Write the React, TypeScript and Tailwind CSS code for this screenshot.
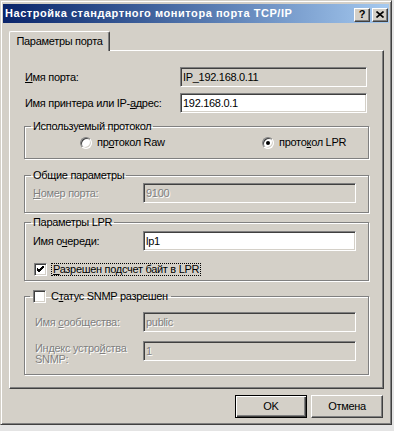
import React from "react";

const sunken =
  "border border-t-[#808080] border-l-[#808080] border-b-white border-r-white shadow-[inset_1px_1px_0_#404040,inset_-1px_-1px_0_#d4d0c8]";
const raised =
  "border border-t-white border-l-white border-b-[#404040] border-r-[#404040] shadow-[inset_-1px_-1px_0_#808080]";
const grey = "text-[#808080] [text-shadow:1px_1px_0_#fff]";

type FieldProps = { value: string; white?: boolean; disabled?: boolean; wide?: boolean };

const Field = ({ value, white, disabled, wide }: FieldProps) => (
  <div
    className={`h-[20px] ${wide ? "w-[187px]" : "w-[213px]"} ${sunken} flex items-center pl-[2px] ${
      white ? "bg-white" : "bg-[#d4d0c8]"
    } ${disabled ? grey : "text-black"}`}
  >
    {value}
  </div>
);

const Group = ({ title, h, children }: { title: React.ReactNode; h: string; children: React.ReactNode }) => (
  <fieldset
    className={`ml-[14px] w-[345px] ${h} border border-[#808080] shadow-[1px_1px_0_#fff,inset_1px_1px_0_#fff] px-[8px]`}
  >
    {title}
    {children}
  </fieldset>
);

const Radio = ({ checked }: { checked?: boolean }) => (
  <span
    className={`w-[12px] h-[12px] rounded-full bg-white ${sunken} flex items-center justify-center shrink-0`}
  >
    {checked && <span className="w-[4px] h-[4px] rounded-full bg-black" />}
  </span>
);

const Check = ({ checked }: { checked?: boolean }) => (
  <span className={`w-[13px] h-[13px] bg-white ${sunken} flex items-center justify-center shrink-0`}>
    {checked && (
      <svg width="7" height="7" viewBox="0 0 7 7">
        <path d="M0 3 L2 5 L7 0 M0 4 L2 6 L7 1 M0 2 L2 4 L7 -1" stroke="#000" strokeWidth="1" fill="none" />
      </svg>
    )}
  </span>
);

export default function App() {
  return (
    <div className="w-[394px] h-[431px] bg-[#e4e4e4] font-['Liberation_Sans',Arial,sans-serif] text-[11px] leading-[13px] tracking-[-0.3px] text-black">
      <div className="w-[392px] h-[425px] bg-[#d4d0c8] border border-t-[#d4d0c8] border-l-[#d4d0c8] border-b-[#404040] border-r-[#404040] shadow-[inset_1px_1px_0_#fff,inset_-1px_-1px_0_#808080] px-[2px] pt-[3px] flex flex-col">
        {/* title bar */}
        <div className="h-[19px] bg-gradient-to-r from-[#0a246a] to-[#a6caf0] flex items-center pl-[2px] pr-[1px]">
          <span className="text-white font-bold text-[11px] tracking-[0.55px]">
            Настройка стандартного монитора порта TCP/IP
          </span>
          <div className="ml-auto flex gap-[2px] pt-[2px] tracking-normal">
            <div className={`w-[16px] h-[14px] bg-[#d4d0c8] ${raised} flex items-center justify-center font-bold text-[11px] leading-none`}>
              ?
            </div>
            <div className={`w-[16px] h-[14px] bg-[#d4d0c8] ${raised} flex items-center justify-center`}>
              <svg width="8" height="7" viewBox="0 0 8 7">
                <path d="M0.5 0.5 L7.5 6.5 M7.5 0.5 L0.5 6.5" stroke="#000" strokeWidth="1.6" />
              </svg>
            </div>
          </div>
        </div>

        {/* tab */}
        <div className="mt-[8px] flex">
          <div className="ml-[6px] w-[101px] h-[20px] -mb-[1px] relative z-10 bg-[#d4d0c8] border-t border-l border-r border-t-white border-l-white border-r-[#404040] shadow-[inset_-1px_0_0_#808080] rounded-t-[2px] flex items-center justify-center pb-[1px]">
            Параметры порта
          </div>
        </div>

        {/* panel */}
        <div className="ml-[6px] w-[375px] h-[339px] border border-t-white border-l-white border-b-[#404040] border-r-[#404040] shadow-[inset_-1px_-1px_0_#808080] pt-[16px] flex flex-col">
          <div className="flex items-center pl-[15px]">
            <span className="w-[155px]">
              <u>И</u>мя порта:
            </span>
            <Field value="IP_192.168.0.11" wide />
          </div>
          <div className="mt-[6px] flex items-center pl-[15px]">
            <span className="w-[155px]">
              Имя принтера или IP-<u>а</u>дрес:
            </span>
            <Field value="192.168.0.1" wide white />
          </div>

          <div className="mt-[7px]">
            <Group
              h="h-[39px]"
              title={<legend className="px-[2px] -ml-[2px] h-[13px] leading-[13px]">Используемый протокол</legend>}
            >
              <div className="mt-[3px] flex items-center">
                <label className="ml-[47px] w-[182px] flex items-center gap-[5px]">
                  <Radio />
                  <span>
                    пр<u>о</u>токол Raw
                  </span>
                </label>
                <label className="flex items-center gap-[5px]">
                  <Radio checked />
                  <span>
                    прото<u>к</u>ол LPR
                  </span>
                </label>
              </div>
            </Group>
          </div>

          <div className="mt-[10px]">
            <Group
              h="h-[44px]"
              title={<legend className="px-[2px] -ml-[2px] h-[13px] leading-[13px]">Общие параметры</legend>}
            >
              <div className="mt-[1px] flex items-center">
                <span className={`w-[110px] ${grey}`}>
                  <u>Н</u>омер порта:
                </span>
                <Field value="9100" disabled />
              </div>
            </Group>
          </div>

          <div className="mt-[3px]">
            <Group
              h="h-[65px]"
              title={<legend className="px-[2px] -ml-[2px] h-[13px] leading-[13px]">Параметры LPR</legend>}
            >
              <div className="mt-[2px] flex items-center">
                <span className="w-[110px]">
                  Имя о<u>ч</u>ереди:
                </span>
                <Field value="lp1" white />
              </div>
              <div className="mt-[12px] flex items-center ml-[1px] gap-[4px]">
                <Check checked />
                <span className="border border-dotted border-black px-[1px] leading-[11px]">
                  <u>Р</u>азрешен подсчет байт в LPR
                </span>
              </div>
            </Group>
          </div>

          <div className="mt-[9px]">
            <Group
              h="h-[85px]"
              title={
                <legend className="px-[3px] -ml-[3px] h-[13px] leading-[13px]">
                  <span className="flex items-center gap-[5px]">
                    <Check />
                    <span>
                      С<u>т</u>атус SNMP разрешен
                    </span>
                  </span>
                </legend>
              }
            >
              <div className="mt-[9px] flex items-center">
                <span className={`w-[110px] pl-[2px] ${grey}`}>
                  Имя <u>с</u>ообщества:
                </span>
                <Field value="public" disabled />
              </div>
              <div className="mt-[9px] flex items-start">
                <span className={`w-[110px] pl-[2px] pt-[2px] leading-[11px] ${grey}`}>
                  Индекс устро<u>й</u>ства
                  <br />
                  SNMP:
                </span>
                <Field value="1" disabled />
              </div>
            </Group>
          </div>
        </div>

        {/* buttons */}
        <div className="mt-[6px] flex justify-end gap-[4px] pr-[6px]">
          <button className="w-[72px] h-[23px] bg-[#d4d0c8] border border-black shadow-[inset_1px_1px_0_#fff,inset_-1px_-1px_0_#404040,inset_-2px_-2px_0_#808080] text-[11px]">
            OK
          </button>
          <button className={`w-[72px] h-[23px] bg-[#d4d0c8] ${raised} text-[11px]`}>Отмена</button>
        </div>
      </div>
    </div>
  );
}
